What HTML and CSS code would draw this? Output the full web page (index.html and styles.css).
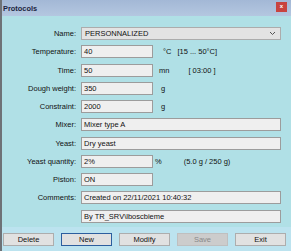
FILE: index.html
```html
<!DOCTYPE html>
<html>
	<head>
		<meta charset="utf-8" />
		<title>Protocols</title>
		<link rel="stylesheet" href="styles.css">
	</head>
	<body>
		<div class="window">
			<div class="titlebar">
				<span class="title">Protocols</span>
				<span class="close">x</span>
			</div>

			<form class="form" action="#">
				<div class="row">
					<label>Name:</label>
					<div class="select wide">
						<span>PERSONNALIZED</span>
						<svg width="7" height="5" viewBox="0 0 7 5"><polyline points="1,1 3.5,3.5 6,1" fill="none" stroke="#555" stroke-width="1"/></svg>
					</div>
				</div>
				<div class="row">
					<label>Temperature:</label>
					<div class="box short">40</div>
					<span class="unit u-c">°C</span>
					<span class="note n-temp">[15 ... 50°C]</span>
				</div>
				<div class="row">
					<label>Time:</label>
					<div class="box short">50</div>
					<span class="unit u-mn">mn</span>
					<span class="note n-time">[ 03:00 ]</span>
				</div>
				<div class="row">
					<label>Dough weight:</label>
					<div class="box short">350</div>
					<span class="unit u-g">g</span>
				</div>
				<div class="row">
					<label>Constraint:</label>
					<div class="box short">2000</div>
					<span class="unit u-g">g</span>
				</div>
				<div class="row">
					<label>Mixer:</label>
					<div class="box wide">Mixer type A</div>
				</div>
				<div class="row">
					<label>Yeast:</label>
					<div class="box wide">Dry yeast</div>
				</div>
				<div class="row">
					<label>Yeast quantity:</label>
					<div class="box short">2%</div>
					<span class="unit u-pct">%</span>
					<span class="note n-yeast">(5.0 g / 250 g)</span>
				</div>
				<div class="row">
					<label>Piston:</label>
					<div class="box short">ON</div>
				</div>
				<div class="row">
					<label>Comments:</label>
					<div class="box wide">Created on 22/11/2021 10:40:32</div>
				</div>
				<div class="row">
					<label></label>
					<div class="box wide">By TR_SRV\lboscbieme</div>
				</div>
			</form>

			<div class="buttons">
				<button type="button">Delete</button>
				<button type="button" class="default">New</button>
				<button type="button">Modify</button>
				<button type="button" disabled>Save</button>
				<button type="button">Exit</button>
			</div>
		</div>
	</body>
</html>
```

FILE: styles.css
```css
html, body {
	margin: 0;
	padding: 0;
	background: #b0e0e6;
}
body {
	font-family: "Liberation Sans", Arial, sans-serif;
	font-size: 7.5px;
	color: #111;
}
.window {
	width: 291px;
	height: 251px;
	display: flex;
	flex-direction: column;
	border-left: 2px solid #6e7277;
	box-sizing: border-box;
	background: #b0e0e6;
}

.titlebar {
	height: 16px;
	display: flex;
	align-items: center;
	justify-content: space-between;
	padding: 0 4px 0 1px;
	background: linear-gradient(#a3b8d6, #b4c7e0);
	flex: none;
}
.title { font-weight: bold; color: #1c2440; font-size: 7.4px; margin-top: 1px; }
.close {
	width: 11px; height: 10px;
	background: #c8433f;
	color: #fff;
	font-size: 6px; font-weight: bold;
	line-height: 9px;
	text-align: center;
	margin-top: -2px;
}

.form {
	flex: 1;
	margin: 0;
	padding: 11px 0 0 0;
	display: flex;
	flex-direction: column;
	gap: 5.25px;
}
.row {
	height: 13px;
	display: flex;
	align-items: center;
}
.row label {
	width: 74px;
	text-align: right;
	margin-right: 5px;
	color: #111;
}
.box, .select {
	height: 13px;
	box-sizing: border-box;
	border: 1px solid #9c9c9c;
	background: #efefef;
	padding: 0 2px;
	line-height: 11px;
	white-space: nowrap;
}
.short { width: 72px; }
.wide { width: 200px; }
.select {
	display: flex;
	align-items: center;
	justify-content: space-between;
	background: #e3e3e3;
	border-color: #acacac;
	padding: 0 4px 0 3px;
}
.unit, .note { position: relative; }
.u-c { margin-left: 10px; }
.n-temp { margin-left: 6px; }
.u-mn { margin-left: 6px; }
.n-time { margin-left: 19px; }
.u-g { margin-left: 8px; }
.u-pct { margin-left: 2px; }
.n-yeast { margin-left: 22px; }

.buttons {
	height: 24px;
	flex: none;
	box-sizing: border-box;
	padding: 6px 5px 0 1px;
	display: flex;
	justify-content: space-between;
	align-items: flex-start;
	background: #bce3ef;
}
.buttons button {
	width: 51px;
	height: 13px;
	padding: 0;
	font: inherit;
	color: #111;
	background: #e1e1e1;
	border: 1px solid #adadad;
}
.buttons button.default { border-color: #2c5e9e; }
.buttons button:disabled { background: #cccccc; border-color: #bfbfbf; color: #8a8a8a; }
```
